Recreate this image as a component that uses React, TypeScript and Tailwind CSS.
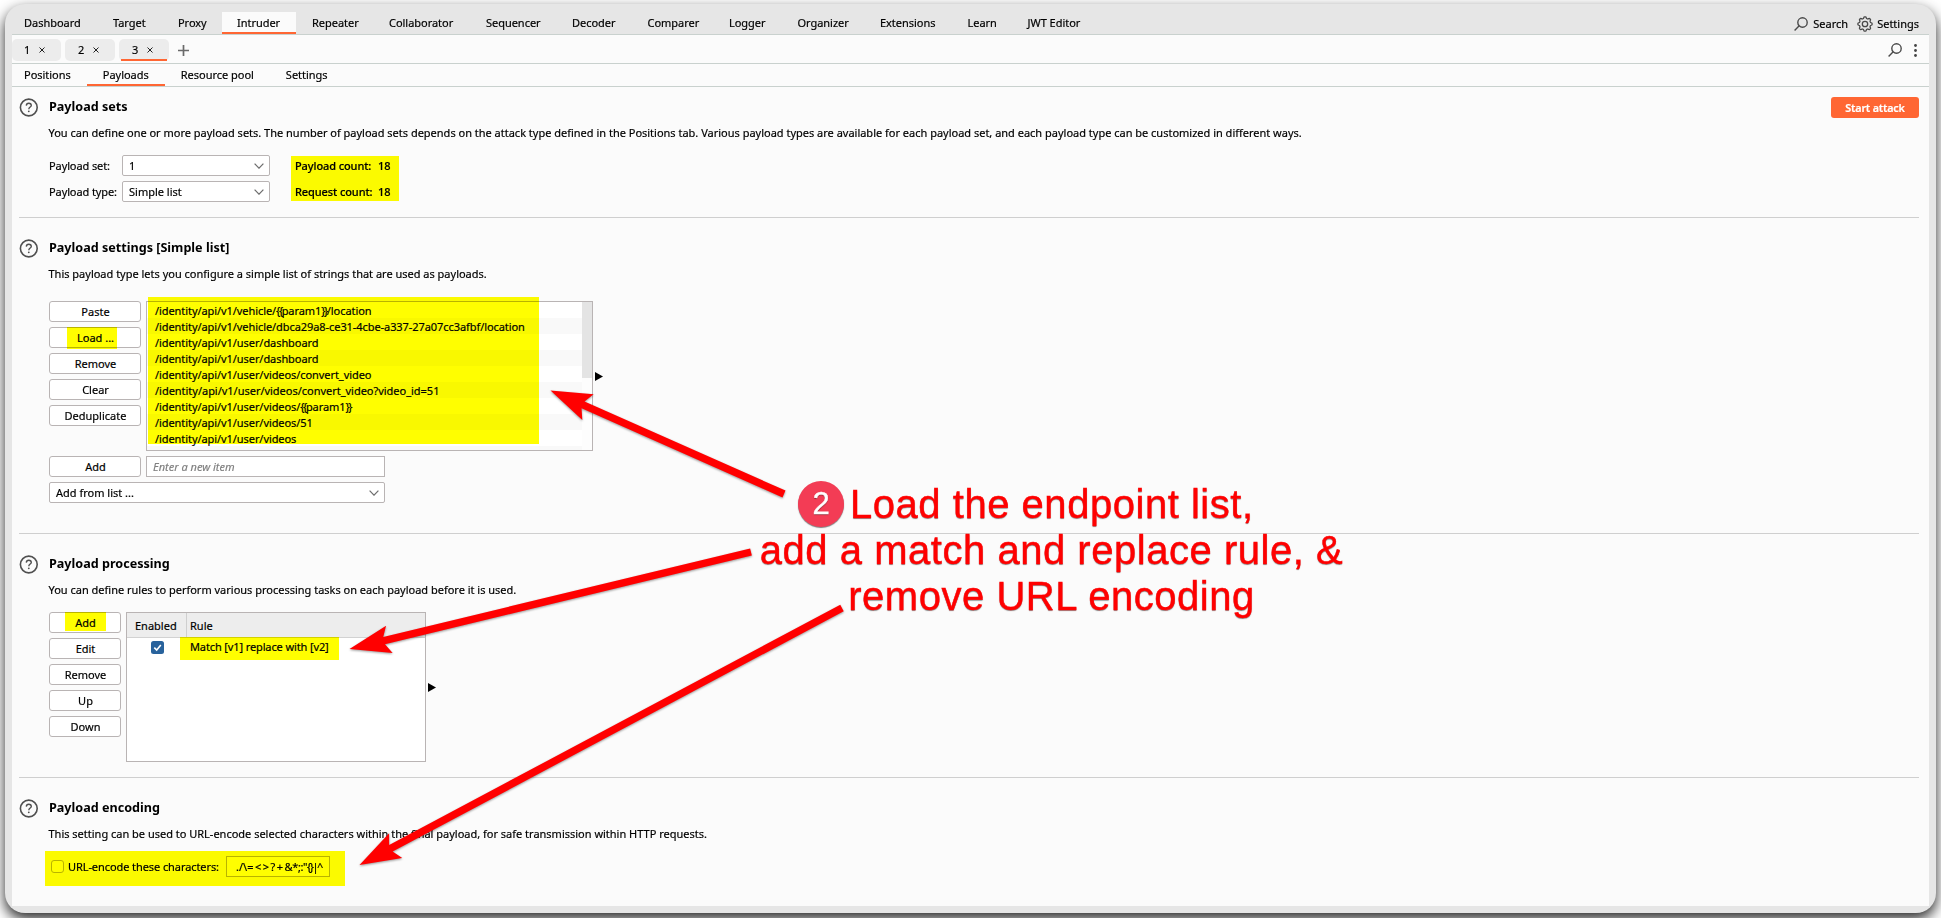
import React from "react";

const TOP_TABS: [string, string][] = [
  ["Dashboard", "w-[89px]"],
  ["Target", "w-[65px]"],
  ["Proxy", "w-[60px]"],
  ["Intruder", "w-[74px]"],
  ["Repeater", "w-[77px]"],
  ["Collaborator", "w-[97px]"],
  ["Sequencer", "w-[86px]"],
  ["Decoder", "w-[75.5px]"],
  ["Comparer", "w-[81.5px]"],
  ["Logger", "w-[68.5px]"],
  ["Organizer", "w-[82.5px]"],
  ["Extensions", "w-[87.5px]"],
  ["Learn", "w-[60px]"],
  ["JWT Editor", "w-[86px]"],
];
const SUB_TABS = ["Positions", "Payloads", "Resource pool", "Settings"];
const PAYLOADS = [
  "/identity/api/v1/vehicle/{{param1}}/location",
  "/identity/api/v1/vehicle/dbca29a8-ce31-4cbe-a337-27a07cc3afbf/location",
  "/identity/api/v1/user/dashboard",
  "/identity/api/v1/user/dashboard",
  "/identity/api/v1/user/videos/convert_video",
  "/identity/api/v1/user/videos/convert_video?video_id=51",
  "/identity/api/v1/user/videos/{{param1}}",
  "/identity/api/v1/user/videos/51",
  "/identity/api/v1/user/videos",
];

const GEAR = (() => {
  const pts: string[] = [];
  for (let i = 0; i <= 96; i++) {
    const a = (i / 96) * Math.PI * 2;
    const r = 6.4 + 0.75 * Math.tanh(2.2 * Math.cos(8 * a));
    pts.push(`${(8 + r * Math.cos(a)).toFixed(2)} ${(8 + r * Math.sin(a)).toFixed(2)}`);
  }
  return "M" + pts.join("L") + "Z";
})();

function SearchIcon() {
  return (
    <svg className="h-[14px] w-[14px] shrink-0" viewBox="0 0 14 14" fill="none" stroke="#4a4a4a" strokeWidth="1.4">
      <circle cx="8.5" cy="5.5" r="4.7" />
      <path d="M5.2 8.8 0.6 13.4" />
    </svg>
  );
}

function GearIcon() {
  return (
    <svg className="h-4 w-4 shrink-0" viewBox="0 0 16 16" fill="none" stroke="#4a4a4a" strokeWidth="1.3">
      <path d={GEAR} />
      <circle cx="8" cy="8" r="2.7" />
    </svg>
  );
}

function Chevron() {
  return (
    <svg className="h-[6px] w-[10px] shrink-0" viewBox="0 0 10 6" fill="none" stroke="#6e6e6e" strokeWidth="1.2">
      <path d="M0.6 0.6 5 5.2 9.4 0.6" />
    </svg>
  );
}

function Triangle() {
  return (
    <svg className="h-[9px] w-2 shrink-0" viewBox="0 0 8 9">
      <path d="M0 0 8 4.5 0 9Z" fill="#000" />
    </svg>
  );
}

function Highlight({ className }: { className: string }) {
  return <span className={`pointer-events-none absolute bg-[#fffe00] mix-blend-multiply ${className}`} />;
}

function PayloadText({ value }: { value: string }) {
  return (
    <>
      {value.split(/(\{\{|\}\})/).map((part, i) =>
        part === "{{" || part === "}}" ? (
          <span key={i} className="tracking-[-1.4px]">{part}</span>
        ) : (
          <React.Fragment key={i}>{part}</React.Fragment>
        ),
      )}
    </>
  );
}

function Button({ label, children }: { label: string; children?: React.ReactNode }) {
  return (
    <div className="relative flex h-[21px] items-center justify-center rounded-[3px] border border-[#b9b4b4] bg-white pl-px">
      {label}
      {children}
    </div>
  );
}

function Select({ value, className }: { value: string; className: string }) {
  return (
    <div className={`flex h-[21px] items-center justify-between rounded-[2px] border border-[#b9b4b4] bg-white pr-[5px] pl-[6px] ${className}`}>
      <span>{value}</span>
      <Chevron />
    </div>
  );
}

function Section({ title, text, action, children }: { title: string; text: string; action?: React.ReactNode; children: React.ReactNode }) {
  return (
    <section className="flex flex-col">
      <div className="flex h-5 items-center">
        <svg className="mr-[11px] h-[19px] w-[19px]" viewBox="0 0 19 19" fill="none" stroke="#505050">
          <circle cx="9.8" cy="9.5" r="8.4" strokeWidth="1.6" />
          <path d="M7.3 7.6Q7.4 5.3 9.8 5.3T12.3 7.5C12.3 9 9.8 9.2 9.8 11.2" strokeWidth="1.4" />
          <circle cx="9.8" cy="13.3" r="0.9" fill="#505050" stroke="none" />
        </svg>
        <h2 className="mb-px flex-1 text-[12.6px] leading-5 font-bold text-black [-webkit-text-stroke:0]">{title}</h2>
        {action}
      </div>
      <p className="mt-[6px] ml-[29.5px] h-5 leading-5 tracking-[-0.005px]">{text}</p>
      <div className="ml-[30px]">{children}</div>
    </section>
  );
}

function Divider({ className }: { className: string }) {
  return <div className={`h-px shrink-0 bg-[#cfcfcf] ${className}`} />;
}

function Arrow({ x, y, tx, ty }: { x: number; y: number; tx: number; ty: number }) {
  const len = Math.hypot(tx - x, ty - y);
  const deg = (Math.atan2(ty - y, tx - x) * 180) / Math.PI;
  return (
    <g transform={`translate(${x} ${y}) rotate(${deg})`}>
      <path d={`M0 0 41 -14 35.6 -3.7 H${len} V3.7 H35.6 L41 14Z`} fill="#ff0000" />
    </g>
  );
}

export default function App() {
  return (
    <div className="relative h-[918px] w-[1941px] overflow-hidden bg-white pt-1 pl-[5px] font-['Noto_Sans',sans-serif] text-[11px] leading-4 whitespace-nowrap text-black [-webkit-text-stroke:0.18px]">
      <div className="flex h-[909px] w-[1931px] flex-col overflow-hidden rounded-[20px] bg-[#e6e6e6] px-[7px] pt-2 pb-[7px] shadow-[0_6px_14px_0_rgba(0,0,0,0.85)]">
        <nav className="flex h-[22px] shrink-0 items-stretch justify-between">
          <div className="-ml-1 flex">
            {TOP_TABS.map(([t, width]) => (
              <div
                key={t}
                className={`flex shrink-0 items-center border-b-2 pt-[2px] tracking-[-0.03px] ${width} ${t === "Intruder" ? "border-[#ff6633] bg-[#fbfbfb] pl-[15px]" : "border-transparent pl-4"}`}
              >
                {t}
              </div>
            ))}
          </div>
          <div className="flex items-center pt-[2px] pr-[10px]">
            <SearchIcon />
            <span className="mr-[9px] ml-[5px]">Search</span>
            <GearIcon />
            <span className="ml-1">Settings</span>
          </div>
        </nav>

        <div className="flex min-h-0 flex-1 flex-col border-t border-[#c9d1ce] bg-[#fbfbfb]">
          <div className="flex h-[29px] shrink-0 items-center justify-between border-b border-[#c9d1ce] pt-[2px]">
            <div className="flex items-center gap-1">
              {["1", "2", "3"].map((n) => (
                <div
                  key={n}
                  className={`relative flex h-[22px] items-center rounded-[5px] bg-[#ececec] ${n === "1" ? "w-[49px] pl-3" : "w-[50px] pl-[13px]"}`}
                >
                  <span className="w-[15px]">{n}</span>
                  <svg className="h-[6px] w-[6px]" viewBox="0 0 6 6" stroke="#222" strokeWidth="1">
                    <path d="M0.5 0.5 5.5 5.5M5.5 0.5 0.5 5.5" />
                  </svg>
                  {n === "3" && <span className="absolute bottom-0 left-[2px] h-[2px] w-[46px] bg-[#ff6633]" />}
                </div>
              ))}
              <svg className="ml-[5px] h-[11px] w-[11px]" viewBox="0 0 11 11" stroke="#6a6a6a" strokeWidth="1.7">
                <path d="M5.5 0V11M0 5.5H11" />
              </svg>
            </div>
            <div className="flex items-center gap-3 pr-3">
              <SearchIcon />
              <svg className="h-[13px] w-[3px]" viewBox="0 0 3 13" fill="#444">
                <circle cx="1.5" cy="1.5" r="1.4" />
                <circle cx="1.5" cy="6.5" r="1.4" />
                <circle cx="1.5" cy="11.5" r="1.4" />
              </svg>
            </div>
          </div>

          <div className="flex h-[23px] shrink-0 border-b border-[#c9d1ce]">
            <div className="-ml-1 flex">
              {SUB_TABS.map((t) => (
                <div
                  key={t}
                  className={`flex items-center border-b-2 px-4 pt-px tracking-[-0.02px] ${t === "Payloads" ? "border-[#ff6633]" : "border-transparent"}`}
                >
                  {t}
                </div>
              ))}
            </div>
          </div>

          <main className="flex flex-col pt-[10px] pr-[10px] pl-[7px]">
            <Section
              title="Payload sets"
              text="You can define one or more payload sets. The number of payload sets depends on the attack type defined in the Positions tab. Various payload types are available for each payload set, and each payload type can be customized in different ways."
              action={
                <button className="-mb-px h-[21px] w-[88px] rounded-[3px] bg-[#ff6633] text-[10.8px] font-semibold tracking-[-0.2px] text-white">
                  Start attack
                </button>
              }
            >
              <div className="mt-3 flex">
                <div className="grid grid-cols-[73px_148px] gap-y-[5px]">
                  <span className="h-[21px] leading-[21px] tracking-[-0.1px]">Payload set:</span>
                  <Select value="1" className="w-[148px]" />
                  <span className="h-[21px] leading-[21px] tracking-[-0.1px]">Payload type:</span>
                  <Select value="Simple list" className="w-[148px]" />
                </div>
                <div className="relative ml-[25px] grid grid-cols-[83px_20px] gap-y-[5px] font-medium tracking-[-0.1px]">
                  <span className="h-[21px] leading-[21px]">Payload count:</span>
                  <span className="h-[21px] leading-[21px]">18</span>
                  <span className="h-[21px] leading-[21px]">Request count:</span>
                  <span className="h-[21px] leading-[21px]">18</span>
                  <Highlight className="top-px -left-1 h-[45px] w-[108px]" />
                </div>
              </div>
            </Section>

            <Divider className="mt-[15px] mb-5" />

            <Section title="Payload settings [Simple list]" text="This payload type lets you configure a simple list of strings that are used as payloads.">
              <div className="mt-[17px] flex gap-[5px]">
                <div className="flex w-[92px] flex-col gap-[5px]">
                  <Button label="Paste" />
                  <Button label="Load ...">
                    <Highlight className="-top-px left-[17px] h-[22px] w-[50px]" />
                  </Button>
                  <Button label="Remove" />
                  <Button label="Clear" />
                  <Button label="Deduplicate" />
                </div>
                <div className="relative flex h-[150px] w-[447px] justify-between border border-[#b9b4b4] bg-white">
                  <div className="flex-1">
                    {PAYLOADS.map((p, i) => (
                      <div key={i} className={`h-4 pl-2 leading-[18px] ${i === 5 ? "tracking-[-0.02px]" : "tracking-[-0.07px]"} ${i % 2 ? "bg-[#f9f9f9]" : "bg-white"}`}>
                        <PayloadText value={p} />
                      </div>
                    ))}
                    <div className="h-1 bg-[#f9f9f9]" />
                  </div>
                  <div className="w-[10px] bg-[#fdfdfd]">
                    <div className="h-[76px] bg-[#e4e4e4]" />
                  </div>
                  <Highlight className="-top-[5px] left-px h-[147px] w-[391px]" />
                </div>
                <div className="-ml-[3px] flex items-center">
                  <Triangle />
                </div>
              </div>
              <div className="mt-[5px] flex gap-[5px]">
                <div className="w-[92px]">
                  <Button label="Add" />
                </div>
                <div className="flex h-[21px] w-[239px] items-center border border-[#b9b4b4] bg-white pl-[6px] text-[#808080] italic">
                  Enter a new item
                </div>
              </div>
              <Select value="Add from list ..." className="mt-[5px] w-[336px]" />
            </Section>

            <Divider className="mt-[30px] mb-5" />

            <Section title="Payload processing" text="You can define rules to perform various processing tasks on each payload before it is used.">
              <div className="mt-3 flex gap-[5px]">
                <div className="flex w-[72px] flex-col gap-[5px]">
                  <Button label="Add">
                    <Highlight className="-top-px left-[15px] h-[19px] w-[41px]" />
                  </Button>
                  <Button label="Edit" />
                  <Button label="Remove" />
                  <Button label="Up" />
                  <Button label="Down" />
                </div>
                <div className="relative h-[150px] w-[300px] border border-[#b9b4b4] bg-white">
                  <div className="flex h-[25px] border-b border-[#d2d2d2] bg-[#ededed] leading-[25px]">
                    <span className="w-[60px] border-r border-[#cfcfcf] pl-2">Enabled</span>
                    <span className="pl-[3px]">Rule</span>
                  </div>
                  <div className="flex h-[18px] items-center">
                    <div className="flex w-[60px] pl-6">
                      <svg className="h-[13px] w-[13px]" viewBox="0 0 13 13">
                        <rect width="13" height="13" rx="2.5" fill="#28629c" />
                        <path d="M3.3 6.6 5.7 9 9.8 4" fill="none" stroke="#fff" strokeWidth="1.6" />
                      </svg>
                    </div>
                    <span className="pl-[3px] tracking-[-0.12px]">Match [v1] replace with [v2]</span>
                  </div>
                  <Highlight className="top-6 left-[53px] h-[23px] w-[159px]" />
                </div>
                <div className="-ml-[3px] flex items-center">
                  <Triangle />
                </div>
              </div>
            </Section>

            <Divider className="mt-[15px] mb-5" />

            <Section title="Payload encoding" text="This setting can be used to URL-encode selected characters within the final payload, for safe transmission within HTTP requests.">
              <div className="relative mt-3 flex h-[21px] items-center">
                <span className="ml-[2px] h-[13px] w-[13px] rounded-[3px] border border-[#b9b4b4] bg-white" />
                <span className="ml-1 w-[158px] pt-px tracking-[-0.08px]">URL-encode these characters:</span>
                <span className="flex h-[21px] w-[104px] items-center border border-[#b9b4b4] bg-white pt-px pl-[9px]">
                  <span>./\</span>
                  <span className="tracking-[1.5px]">=&lt;&gt;?+</span>
                  <span className="tracking-[-0.4px]">&amp;*;:&quot;</span>
                  <span className="tracking-[-1.5px]">{"{}|^"}</span>
                </span>
                <Highlight className="-top-[5px] -left-1 h-[35px] w-[300px]" />
              </div>
            </Section>
          </main>
        </div>
      </div>

      <svg className="pointer-events-none absolute inset-0 h-[918px] w-[1941px] drop-shadow-[0_1px_1px_rgba(0,0,0,0.4)]" viewBox="0 0 1941 918">
        <Arrow x={550.5} y={390.5} tx={784} ty={494} />
        <Arrow x={349.5} y={649} tx={751} ty={552} />
        <Arrow x={359.5} y={865} tx={842} ty={608} />
      </svg>
      <div className="absolute top-[480.5px] left-[759.5px] flex w-[584px] flex-col items-center font-['Liberation_Sans',sans-serif] text-[40px] leading-[46px] tracking-[0.53px] text-[#ff0000] [-webkit-text-stroke:0.4px] [text-shadow:0_1px_1px_rgba(0,0,0,0.45)]">
        <div className="flex w-full items-center pl-[38.5px]">
          <span className="mr-[6px] flex h-[46px] w-[46px] items-center justify-center rounded-full bg-[#f33c55] text-[31px] tracking-normal text-white shadow-[0_1px_1px_rgba(0,0,0,0.5)]">
            2
          </span>
          Load the endpoint list,
        </div>
        <div>add a match and replace rule, &amp;</div>
        <div>remove URL encoding</div>
      </div>
    </div>
  );
}
